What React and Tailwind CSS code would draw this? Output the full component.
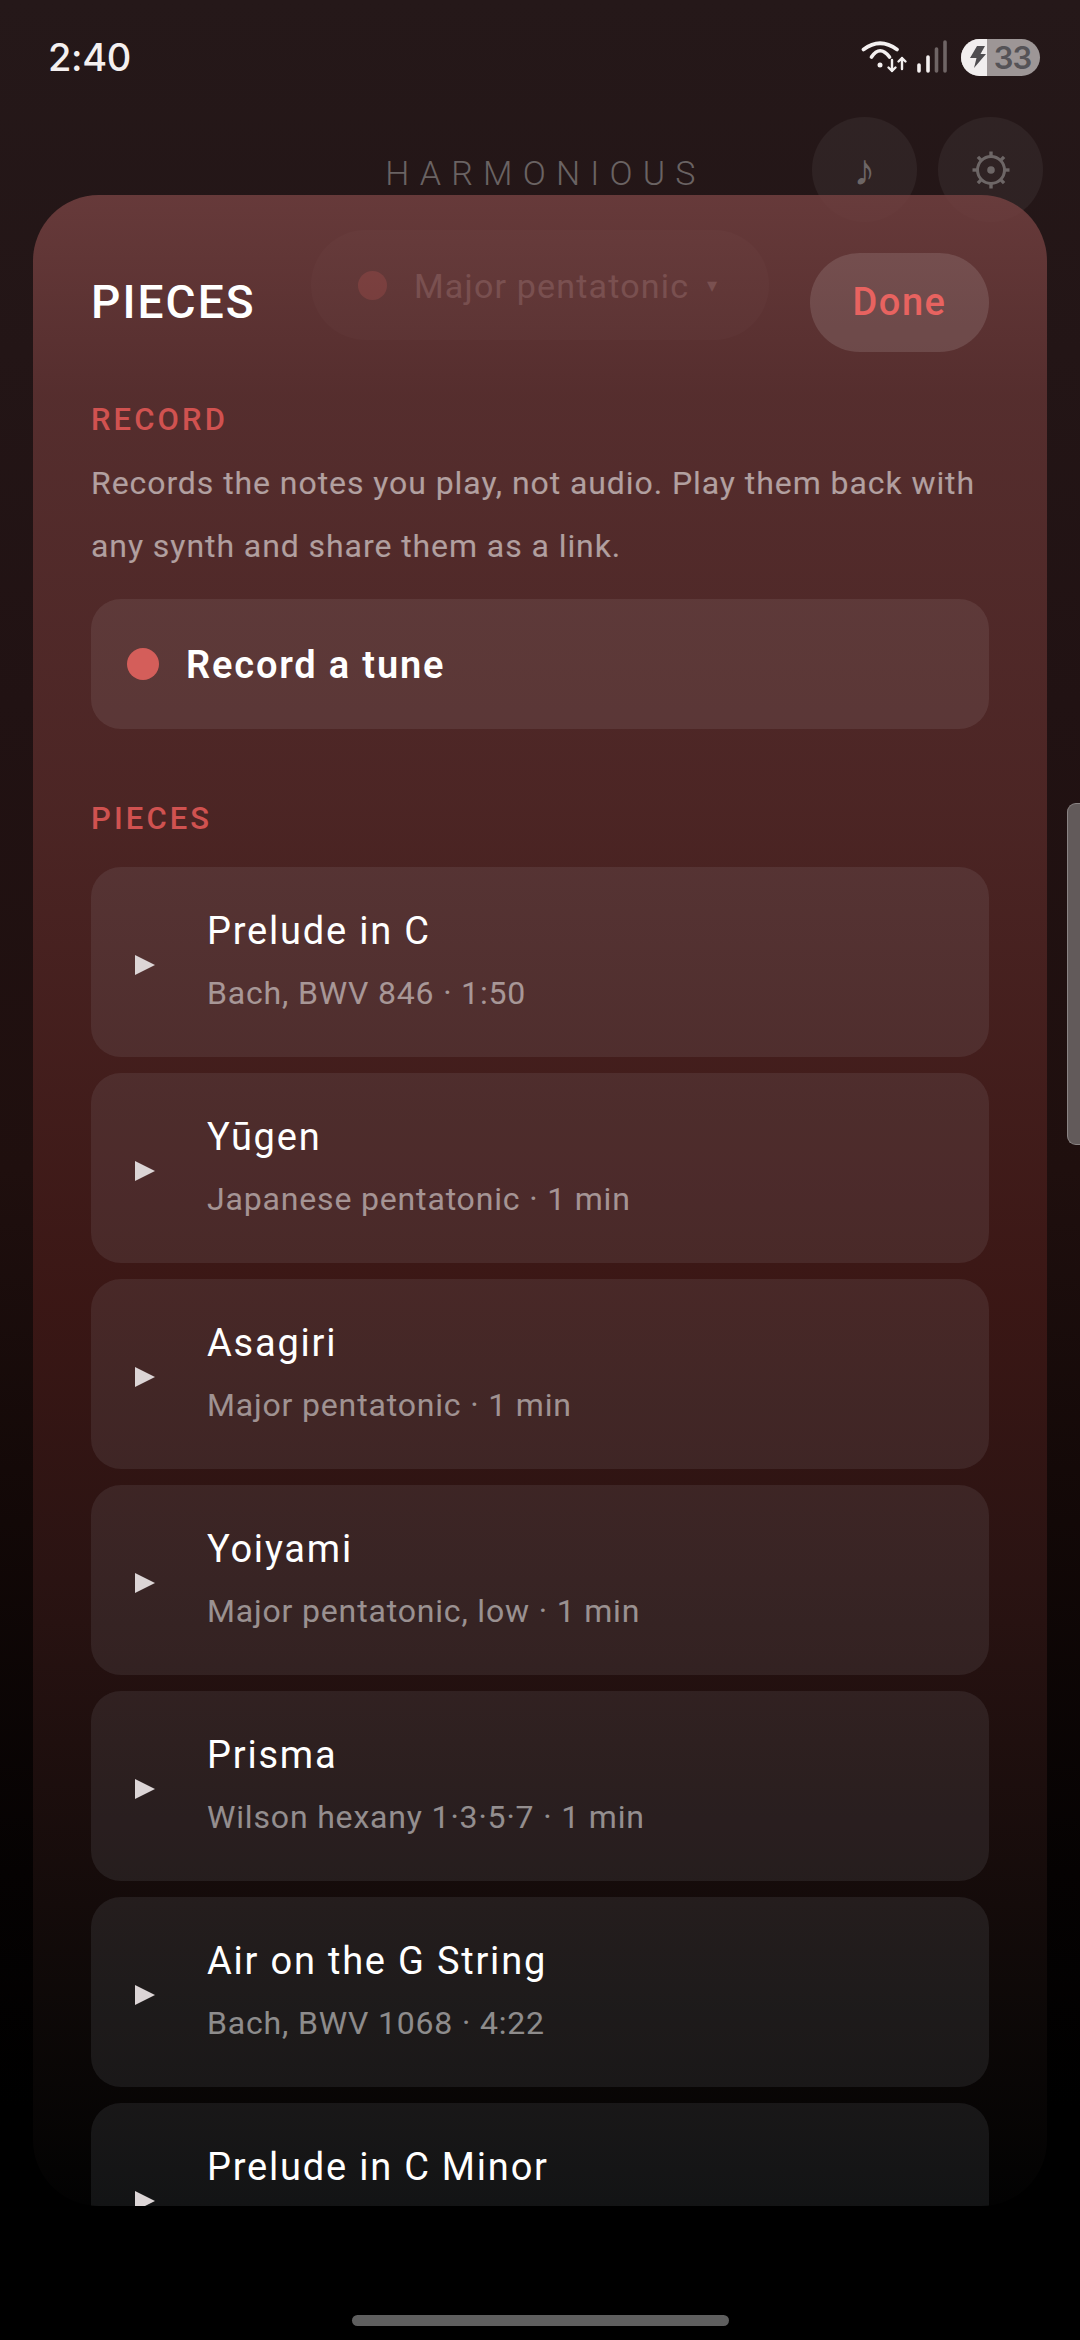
const pieces = [
  ["Prelude in C", "Bach, BWV 846 · 1:50"],
  ["Yūgen", "Japanese pentatonic · 1 min"],
  ["Asagiri", "Major pentatonic · 1 min"],
  ["Yoiyami", "Major pentatonic, low · 1 min"],
  ["Prisma", "Wilson hexany 1·3·5·7 · 1 min"],
  ["Air on the G String", "Bach, BWV 1068 · 4:22"],
  ["Prelude in C Minor", ""],
];

function Wifi() {
  return (
    <svg width="50" height="36" viewBox="0 0 50 36" fill="none" stroke="#f4f0f0" strokeWidth="3.7" strokeLinecap="round" strokeLinejoin="round">
      <path d="M4.5 10.5Q21 -2 38 10.5" />
      <path d="M12.5 18Q21 5.5 30.5 18" />
      <circle cx="21" cy="26" r="2.5" fill="#f4f0f0" stroke="none" />
      <path d="M33 21V32M29.5 28.5L33 32L36.5 28.5" strokeWidth="2.4" />
      <path d="M43 30V19M39.5 22.5L43 19L46.5 22.5" strokeWidth="2.4" />
    </svg>
  );
}

function Signal() {
  return (
    <svg width="32" height="34" viewBox="0 0 32 34" strokeLinecap="round" strokeWidth="3.6" fill="none">
      <path d="M3 25V31" stroke="#f4f0f0" />
      <path d="M12 17V31" stroke="#f4f0f0" />
      <path d="M20.5 9V31" stroke="#6f6565" />
      <path d="M29 2V31" stroke="#6f6565" />
    </svg>
  );
}

function Battery() {
  return (
    <div className="flex h-[37px] w-[79px] overflow-hidden rounded-full bg-[#9d9696]">
      <div className="flex h-full w-[26px] items-center justify-end bg-[#f1eeee]">
        <svg width="18" height="22" viewBox="0 0 18 22" fill="#4f4d50">
          <path d="M8 0H16L11.5 8H17L5 22L7.5 12H1Z" />
        </svg>
      </div>
      <div className="flex flex-1 items-center justify-center pr-[2px] font-[Inter,sans-serif] text-[31px] leading-none font-semibold tracking-[-0.03em] text-[#555357]">33</div>
    </div>
  );
}

function Gear() {
  const teeth = [0, 45, 90, 135, 180, 225, 270, 315];
  return (
    <svg width="40" height="40" viewBox="0 0 40 40" fill="none" stroke="#6d6666">
      <circle cx="20" cy="20" r="13.5" strokeWidth="3" />
      <circle cx="20" cy="20" r="3.8" fill="#6d6666" stroke="none" />
      {teeth.map((a) => (
        <path key={a} d="M20 6V1.5" strokeWidth="3.4" transform={`rotate(${a} 20 20)`} />
      ))}
    </svg>
  );
}

function Play() {
  return (
    <svg width="20" height="20" viewBox="0 0 20 20" className="mt-[6px] shrink-0" fill="#dcd5d6">
      <path d="M0 0L20 10L0 20Z" />
    </svg>
  );
}

function Row({ title, sub }) {
  return (
    <div className="flex h-[190px] shrink-0 items-center rounded-[30px] bg-[rgba(235,240,255,0.08)] pl-[44px]">
      <Play />
      <div className="ml-[52px] flex flex-col gap-[16px]">
        <div className="h-[46px] text-[38px] leading-[46px] tracking-[0.047em] text-white">{title}</div>
        <div className="h-[46px] text-[32px] leading-[46px] tracking-[0.026em] text-white/50">{sub}</div>
      </div>
    </div>
  );
}

export default function App() {
  return (
    <div className="relative flex h-[2340px] w-[1080px] flex-col overflow-hidden bg-[linear-gradient(180deg,#251819_0%,#211213_30%,#1f0f0e_50%,#120807_65%,#050202_80%,#000000_90%)] font-[Roboto,sans-serif]">
      <div className="flex h-[114px] items-center justify-between pr-[40px] pl-[48px]">
        <span className="font-[Inter,sans-serif] text-[38px] font-medium tracking-[-0.01em] text-[#f4f0f0]">2:40</span>
        <div className="flex items-center">
          <Wifi />
          <div className="ml-[7px]"><Signal /></div>
          <div className="ml-[13px]"><Battery /></div>
        </div>
      </div>

      <div className="mt-[3px] grid h-[105px] grid-cols-[1fr_auto_1fr] items-center pr-[37px]">
        <div />
        <div className="pt-[8px] pl-[48px] text-[34px] font-light tracking-[0.3em] text-[#6a6363]">HARMONIOUS</div>
        <div className="flex justify-end gap-[21px]">
          <div className="flex h-[105px] w-[105px] items-center justify-center rounded-full bg-white/[0.05] text-[44px] text-[#6d6666]">♪</div>
          <div className="flex h-[105px] w-[105px] items-center justify-center rounded-full bg-white/[0.05]"><Gear /></div>
        </div>
      </div>

      <div className="mt-[8px] flex h-[110px] w-[458px] items-center self-center rounded-full bg-white/[0.09] pl-[47px]">
        <div className="h-[29px] w-[29px] rounded-full bg-[#d85f5a]" />
        <div className="ml-[27px] pt-[2px] text-[34px] tracking-[0.035em] text-[#d8d0d0]">Major pentatonic</div>
        <div className="ml-[18px] text-[20px] text-[#d8d0d0]">▾</div>
      </div>

      <div className="mt-auto mb-[14px] h-[11px] w-[377px] self-center rounded-full bg-[#5f5f5f]" />

      <div className="absolute top-[195px] right-[33px] left-[33px] h-[2011px] overflow-hidden rounded-[66px] bg-[linear-gradient(180deg,rgba(114,64,64,0.85)_0%,rgba(94,50,50,0.85)_10%,rgba(82,40,39,0.88)_30%,rgba(62,24,22,0.9)_55%,rgba(44,20,19,0.92)_69%,rgba(14,9,8,0.95)_90%,rgba(2,2,2,0.95)_100%)] px-[58px] pt-[58px]">
        <div className="flex h-[99px] items-center justify-between">
          <div className="text-[46px] font-medium tracking-[0.045em] text-white">PIECES</div>
          <div className="flex h-[99px] w-[179px] items-center justify-center rounded-full bg-white/[0.12] text-[38px] font-medium tracking-[0.04em] text-[#e86360]">Done</div>
        </div>

        <div className="mt-[48px] text-[31px] leading-[40px] font-medium tracking-[0.1em] text-[#d05250]">RECORD</div>
        <div className="mt-[12px] text-[32px] leading-[63px] tracking-[0.029em] text-white/55">Records the notes you play, not audio. Play them back with any synth and share them as a link.</div>

        <div className="mt-[21px] flex h-[130px] items-center rounded-[30px] bg-white/[0.08] pl-[36px]">
          <div className="h-[32px] w-[32px] rounded-full bg-[#d45e5a]" />
          <div className="ml-[27px] pt-[2px] text-[38px] font-semibold tracking-[0.048em] text-white">Record a tune</div>
        </div>

        <div className="mt-[70px] text-[31px] leading-[40px] font-medium tracking-[0.1em] text-[#d05250]">PIECES</div>

        <div className="mt-[28px] flex flex-col gap-[16px]">
          {pieces.map(([t, s]) => (
            <Row key={t} title={t} sub={s} />
          ))}
        </div>
      </div>

      <div className="absolute top-[803px] right-0 h-[342px] w-[13px] rounded-l-[9px] border-y border-l border-[#8a8484] bg-[#625a5a]" />
    </div>
  );
}
